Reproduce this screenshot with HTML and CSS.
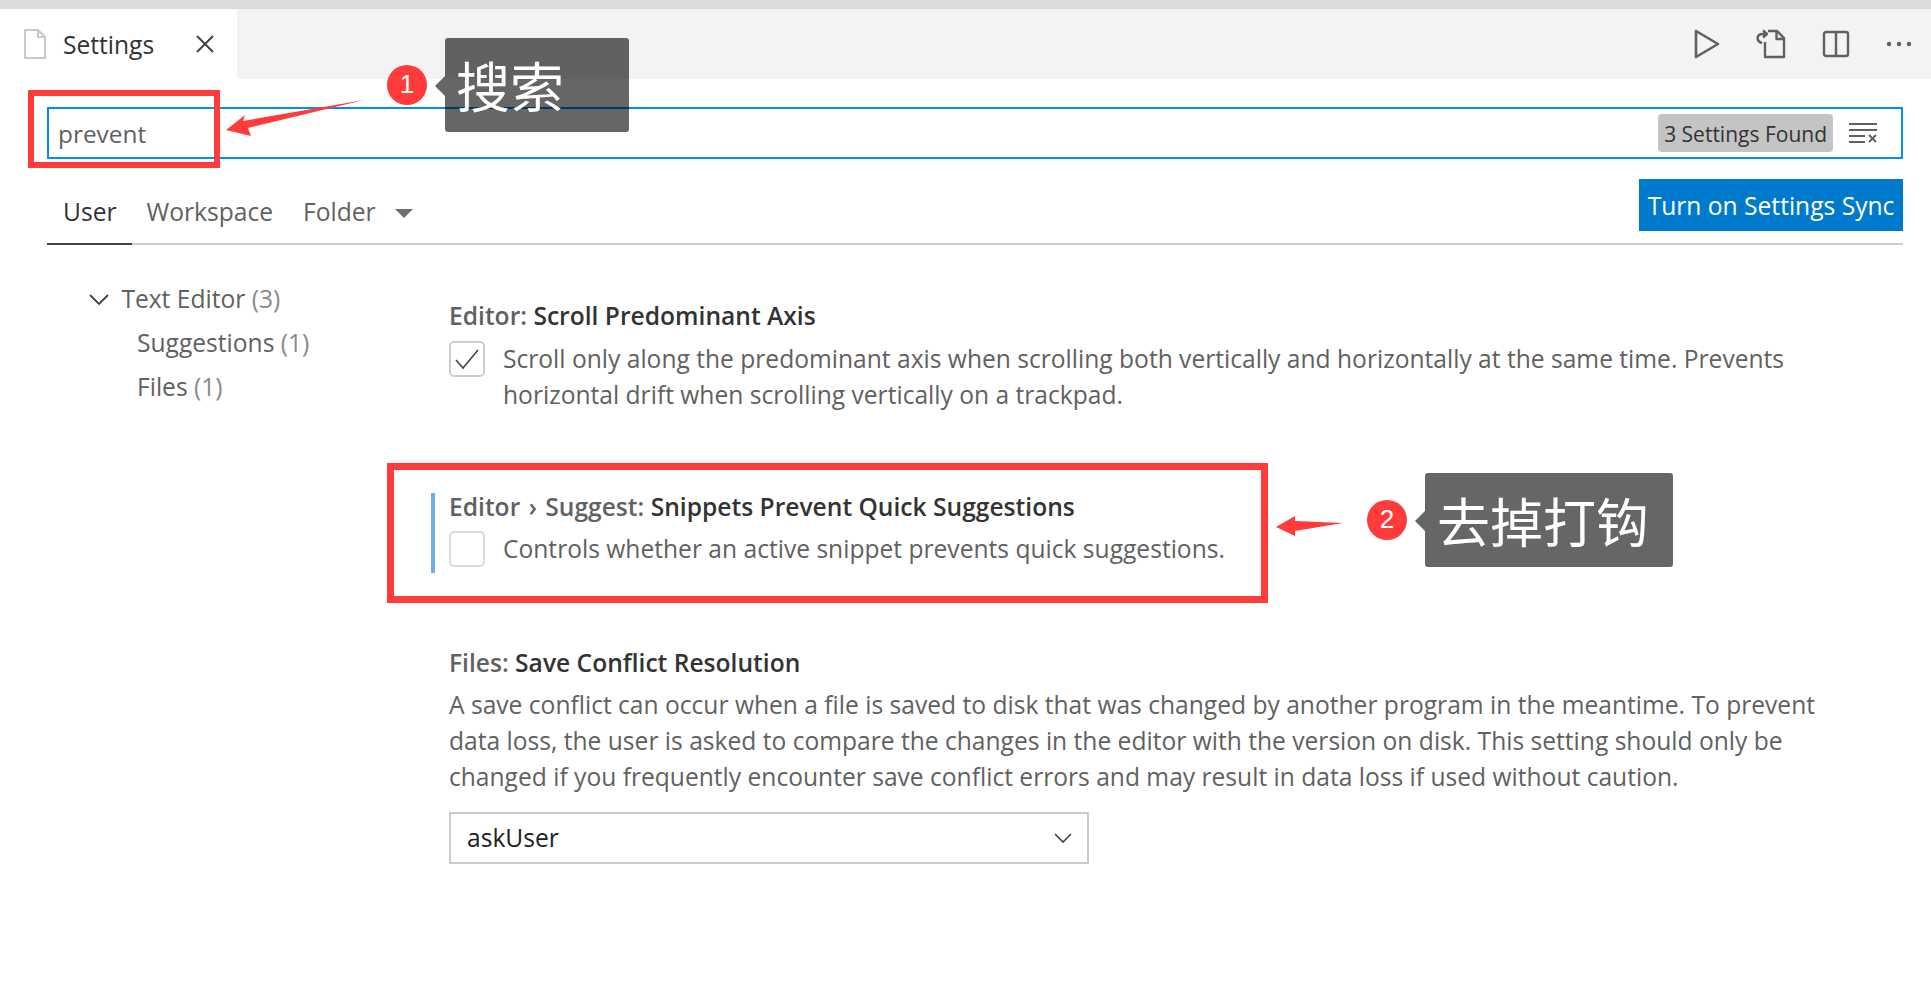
FILE: index.html
```html
<!DOCTYPE html>
<html lang="en">
<head>
    <meta charset="UTF-8">
    <title>Settings</title>
    <link rel="stylesheet" href="styles.css">
</head>
<body>
    <div class="top-strip"></div>

    <div class="tabbar">
        <div class="tab">
            <svg class="file-icon" width="24" height="30" viewBox="0 0 24 30" fill="none" stroke="#c8c8c8" stroke-width="2"><path d="M2 1h13l7 7v21H2z"/><path d="M15 1v7h7"/></svg>
            <span class="tab-name">Settings</span>
            <svg class="tab-close" width="20" height="20" viewBox="0 0 20 20" stroke="#424242" stroke-width="2"><path d="M2 2l16 16M18 2L2 18"/></svg>
        </div>
        <div class="actions">
            <svg width="26" height="30" viewBox="0 0 26 30" fill="none" stroke="#616161" stroke-width="2.6" stroke-linejoin="round"><path d="M2 2l22 13L2 28z"/></svg>
            <svg width="30" height="30" viewBox="0 0 30 30" fill="none" stroke="#616161" stroke-width="2.4" stroke-linejoin="round"><path d="M9 13v15h19V9l-7-7H12"/><path d="M20.500 2v8H28"/><path d="M6 14C0 12 0 5 7 5h3M7 1.500l4 3.500-4 3.500"/></svg>
            <svg width="28" height="28" viewBox="0 0 28 28" fill="none" stroke="#616161" stroke-width="2.4"><rect x="2" y="2" width="24" height="24" rx="2"/><path d="M14 2v24"/></svg>
            <svg class="more" width="26" height="6" viewBox="0 0 26 6" fill="#616161"><circle cx="3" cy="3" r="2.200"/><circle cx="13" cy="3" r="2.200"/><circle cx="23" cy="3" r="2.200"/></svg>
        </div>
    </div>

    <div class="search">
        <span class="search-text">prevent</span>
        <span class="count">3 Settings Found</span>
        <svg class="clear-icon" width="28" height="22" viewBox="0 0 28 22" fill="none" stroke="#616161" stroke-width="2"><path d="M0 2h28M0 8h28M0 14h16M0 20h16M20 13l7 7M27 13l-7 7"/></svg>
    </div>

    <div class="scope">
        <span class="scope-tab active">User</span>
        <span class="scope-tab">Workspace</span>
        <span class="scope-tab">Folder</span>
        <span class="caret"></span>
        <button class="sync">Turn on Settings Sync</button>
    </div>

    <div class="content">
        <ul class="toc">
            <li class="toc-group">
                <svg width="20" height="11" viewBox="0 0 20 11" fill="none" stroke="#424242" stroke-width="1.800"><path d="M1 1l9 9 9-9"/></svg>
                Text Editor <span class="num">(3)</span>
            </li>
            <li class="toc-item">Suggestions <span class="num">(1)</span></li>
            <li class="toc-item">Files <span class="num">(1)</span></li>
        </ul>

        <div class="list">
            <div class="setting">
                <div class="title">Editor: <b>Scroll Predominant Axis</b></div>
                <div class="check-row">
                    <span class="checkbox checked">
                        <svg width="24" height="20" viewBox="0 0 24 20" fill="none" stroke="#4a4a4a" stroke-width="1.700"><path d="M1 11l7 8L23 1"/></svg>
                    </span>
                    <p>Scroll only along the predominant axis when scrolling both vertically and horizontally at the same time. Prevents horizontal drift when scrolling vertically on a trackpad.</p>
                </div>
            </div>

            <div class="setting focused">
                <div class="title">Editor <span class="sep">›</span> Suggest: <b>Snippets Prevent Quick Suggestions</b></div>
                <div class="check-row tight">
                    <span class="checkbox"></span>
                    <p>Controls whether an active snippet prevents quick suggestions.</p>
                </div>
            </div>

            <div class="setting">
                <div class="title">Files: <b>Save Conflict Resolution</b></div>
                <p class="plain">A save conflict can occur when a file is saved to disk that was changed by another program in the meantime. To prevent data loss, the user is asked to compare the changes in the editor with the version on disk. This setting should only be changed if you frequently encounter save conflict errors and may result in data loss if used without caution.</p>
                <div class="select">
                    <span>askUser</span>
                    <svg width="18" height="11" viewBox="0 0 18 11" fill="none" stroke="#424242" stroke-width="1.600"><path d="M1 1l8 8 8-8"/></svg>
                </div>
            </div>
        </div>
    </div>

    <!-- annotations drawn over the screenshot -->
    <div class="mark mark-search"></div>
    <div class="mark mark-setting"></div>
    <svg class="arrows" width="1931" height="1002" viewBox="0 0 1931 1002" fill="#ff3b3b">
        <polygon points="364,100 243,121 245,115 226,130 251,136 248,128"/>
        <polygon points="1343,523 1295,521 1295,516 1276,527 1295,536 1295,531"/>
    </svg>
    <div class="dot dot-1">1</div>
    <div class="note note-1">搜索</div>
    <div class="dot dot-2">2</div>
    <div class="note note-2">去掉打钩</div>
</body>
</html>
```

FILE: styles.css
```css
body {
    margin: 0;
    height: 1002px;
    overflow: hidden;
    position: relative;
    background: white;
    color: #616161;
    font-family: 'Open Sans', 'Noto Sans CJK SC', sans-serif;
    font-size: 24.6px;
}

.top-strip {
    height: 9px;
    background-color: #dcdcdc;
}

.tabbar {
    display: flex;
    height: 70px;
    background-color: #f3f3f3;
}

.tab {
    display: flex;
    align-items: center;
    width: 237px;
    box-sizing: border-box;
    padding: 0 22px 0 23px;
    background-color: white;
    color: #333;
}

.tab-name {
    margin-left: 16px;
}

.tab-close {
    margin-left: auto;
}

.actions {
    display: flex;
    align-items: center;
    gap: 36px;
    margin-left: auto;
    margin-right: 19px;
}

.search {
    display: flex;
    align-items: center;
    height: 52px;
    box-sizing: border-box;
    margin: 28px 28px 0 47px;
    padding: 0 24px 0 9px;
    border: 2px solid #0090f1;
}

.search-text {
    flex: 1;
    font-size: 24.4px;
    padding-top: 1px;
}

.count {
    padding: 0 6px;
    height: 38px;
    line-height: 40px;
    background-color: #c4c4c4;
    border-radius: 4px;
    color: #333;
    font-size: 21px;
}

.clear-icon {
    margin-left: 16px;
}

.scope {
    display: flex;
    align-items: flex-end;
    height: 86px;
    box-sizing: border-box;
    margin: 0 28px 0 47px;
    border-bottom: 2px solid #ccc;
    position: relative;
}

.scope-tab {
    padding: 0 15px;
    height: 58px;
    line-height: 54px;
    box-sizing: border-box;
}

.scope-tab.active {
    color: #333;
    padding-left: 16px;
    border-bottom: 2px solid #424242;
    margin-bottom: -2px;
    height: 60px;
}

.caret {
    width: 0;
    height: 0;
    margin: 0 0 25px 4px;
    border-left: 9px solid transparent;
    border-right: 9px solid transparent;
    border-top: 9px solid #6f6f6f;
}

.sync {
    margin: 0 0 12px auto;
    height: 52px;
    width: 264px;
    padding: 0;
    border: none;
    background-color: #007acc;
    color: white;
    font-family: inherit;
    font-size: 24.6px;
}

.content {
    display: flex;
}

.toc {
    list-style: none;
    width: 449px;
    flex-shrink: 0;
    box-sizing: border-box;
    margin: 0;
    padding: 32px 0 0 89px;
}

.toc li {
    height: 44px;
    line-height: 44px;
    white-space: nowrap;
}

.toc-group svg {
    margin-right: 6px;
    vertical-align: 3px;
}

.toc-item {
    margin-left: 48px;
}

.num {
    color: #8a8a8a;
}

.list {
    width: 1390px;
    padding-top: 53px;
}

.setting {
    position: relative;
    line-height: 36px;
}

.setting + .setting {
    margin-top: 76px;
}

.setting + .setting + .setting {
    margin-top: 78px;
}

.title {
    height: 36px;
    font-weight: 600;
}

.title b {
    font-weight: 600;
    color: #333;
}

.sep {
    margin: 0 2px;
}

.setting.focused::before {
    content: "";
    position: absolute;
    left: -18px;
    top: 4px;
    width: 4px;
    height: 80px;
    background-color: #6cb0e6;
}

.setting p {
    margin: 0;
}

.check-row {
    display: flex;
    margin-top: 7px;
}

.check-row.tight {
    margin-top: 6px;
}

.checkbox {
    flex-shrink: 0;
    display: flex;
    align-items: center;
    justify-content: center;
    width: 36px;
    height: 36px;
    box-sizing: border-box;
    margin-right: 18px;
    border: 2px solid #dcdcdc;
    border-radius: 5px;
}

.checkbox.checked {
    border-color: #cecece;
}

.setting .plain {
    margin-top: 6px;
}

.select {
    display: flex;
    align-items: center;
    justify-content: space-between;
    width: 640px;
    height: 52px;
    box-sizing: border-box;
    margin-top: 17px;
    padding: 0 15px 0 16px;
    border: 2px solid #ccc;
    color: #222;
}

/* annotations */
.mark {
    position: absolute;
    box-sizing: border-box;
    border: 6px solid #ff3b3b;
}

.mark-search {
    left: 28px;
    top: 90px;
    width: 192px;
    height: 78px;
}

.mark-setting {
    left: 387px;
    top: 463px;
    width: 881px;
    height: 140px;
    border-width: 7px;
}

.arrows {
    position: absolute;
    left: 0;
    top: 0;
}

.dot {
    position: absolute;
    width: 40px;
    height: 40px;
    line-height: 38px;
    text-align: center;
    border-radius: 50%;
    background-color: #ff3b3b;
    color: white;
    font-size: 26px;
    font-family: 'Liberation Sans', sans-serif;
}

.dot-1 {
    left: 387px;
    top: 65px;
}

.dot-2 {
    left: 1367px;
    top: 500px;
}

.note {
    position: absolute;
    box-sizing: border-box;
    height: 94px;
    line-height: 94px;
    padding-left: 12px;
    background-color: rgba(0, 0, 0, 0.6);
    border-radius: 3px;
    color: white;
    font-family: 'Noto Sans CJK SC', sans-serif;
    font-size: 53px;
}

.note::before {
    content: "";
    position: absolute;
    left: -10px;
    top: 38px;
    border-top: 10px solid transparent;
    border-bottom: 10px solid transparent;
    border-right: 10px solid rgba(0, 0, 0, 0.6);
}

.note-1 {
    left: 445px;
    top: 38px;
    width: 184px;
    padding-left: 11px;
    font-size: 54px;
}

.note-2 {
    left: 1425px;
    top: 473px;
    width: 248px;
}
```
